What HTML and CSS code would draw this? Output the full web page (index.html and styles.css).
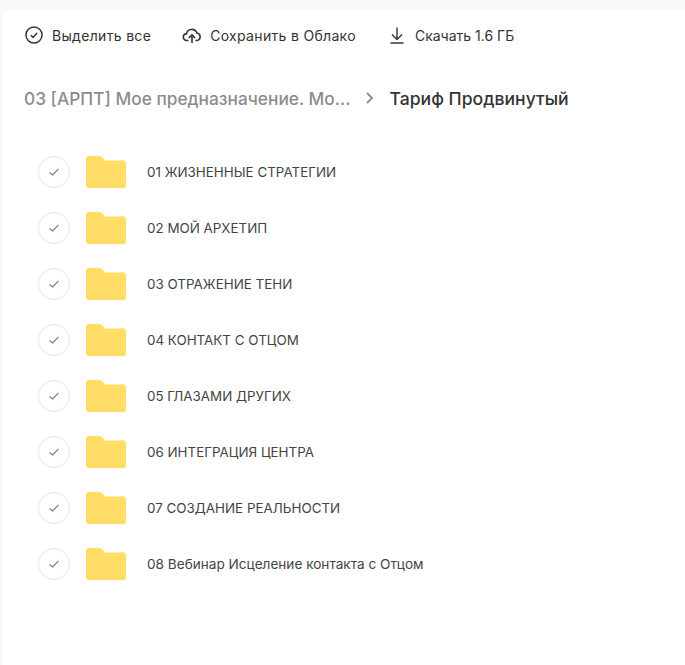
FILE: index.html
```html
<!DOCTYPE html>
<html lang="ru">
<head>
<meta charset="utf-8">
<title>Тариф Продвинутый</title>
<link rel="stylesheet" href="styles.css">
</head>
<body>
<main class="panel">
  <div class="toolbar">
    <span class="action a1">
      <svg class="ico" width="20" height="20" viewBox="0 0 20 20" fill="none" stroke="#333" stroke-width="1.5"><circle cx="10" cy="10" r="8"/><path d="M6.800 10.200l2.300 2.200 4-4.300"/></svg>
      <span class="wide">Выделить все</span>
    </span>
    <span class="action a2">
      <svg class="ico" width="20" height="20" viewBox="0 0 20 20" fill="none" stroke="#333" stroke-width="1.6"><path d="M6.500 15.500H4.800a3.300 3.300 0 0 1-.4-6.600A5.400 5.400 0 0 1 14.800 8a3.800 3.800 0 0 1 .3 7.500h-1.600"/><path d="M10 18V10M6.800 13l3.200-3.200 3.200 3.200"/></svg>
      <span class="wide">Сохранить в Облако</span>
    </span>
    <span class="action">
      <svg class="ico" width="20" height="20" viewBox="0 0 20 20" fill="none" stroke="#333" stroke-width="1.4"><path d="M10 2.500v11.500M5 9.500l5 5 5-5M3.500 18h13"/></svg>
      <span>Скачать 1.6 ГБ</span>
    </span>
  </div>
  <nav class="crumbs">
    <span class="crumb-parent">03 [АРПТ] Мое предназначение. Мо...</span>
    <svg class="chev" width="10" height="14" viewBox="0 0 10 14" fill="none" stroke="#8a8a8a" stroke-width="1.8"><path d="M2 2l5 5-5 5"/></svg>
    <span class="crumb-current">Тариф Продвинутый</span>
  </nav>
  <ul class="list">
    <li class="row"><span class="check"><svg width="12" height="10" viewBox="0 0 12 10" fill="none" stroke="#8f8f8f" stroke-width="1.4"><path d="M1.500 5.500l3 2.500 6-6"/></svg></span><svg class="folder" width="40" height="32" viewBox="0 0 40 32"><path fill="#ffdd66" d="M3 0h10c2 0 3 .8 4.200 2.200L19 4.400h18a3 3 0 0 1 3 3V29a3 3 0 0 1-3 3H3a3 3 0 0 1-3-3V3a3 3 0 0 1 3-3z"/></svg><span class="name">01 ЖИЗНЕННЫЕ СТРАТЕГИИ</span></li>
    <li class="row"><span class="check"><svg width="12" height="10" viewBox="0 0 12 10" fill="none" stroke="#8f8f8f" stroke-width="1.4"><path d="M1.500 5.500l3 2.500 6-6"/></svg></span><svg class="folder" width="40" height="32" viewBox="0 0 40 32"><path fill="#ffdd66" d="M3 0h10c2 0 3 .8 4.200 2.200L19 4.400h18a3 3 0 0 1 3 3V29a3 3 0 0 1-3 3H3a3 3 0 0 1-3-3V3a3 3 0 0 1 3-3z"/></svg><span class="name">02 МОЙ АРХЕТИП</span></li>
    <li class="row"><span class="check"><svg width="12" height="10" viewBox="0 0 12 10" fill="none" stroke="#8f8f8f" stroke-width="1.4"><path d="M1.500 5.500l3 2.500 6-6"/></svg></span><svg class="folder" width="40" height="32" viewBox="0 0 40 32"><path fill="#ffdd66" d="M3 0h10c2 0 3 .8 4.200 2.200L19 4.400h18a3 3 0 0 1 3 3V29a3 3 0 0 1-3 3H3a3 3 0 0 1-3-3V3a3 3 0 0 1 3-3z"/></svg><span class="name">03 ОТРАЖЕНИЕ ТЕНИ</span></li>
    <li class="row"><span class="check"><svg width="12" height="10" viewBox="0 0 12 10" fill="none" stroke="#8f8f8f" stroke-width="1.4"><path d="M1.500 5.500l3 2.500 6-6"/></svg></span><svg class="folder" width="40" height="32" viewBox="0 0 40 32"><path fill="#ffdd66" d="M3 0h10c2 0 3 .8 4.200 2.200L19 4.400h18a3 3 0 0 1 3 3V29a3 3 0 0 1-3 3H3a3 3 0 0 1-3-3V3a3 3 0 0 1 3-3z"/></svg><span class="name">04 КОНТАКТ С ОТЦОМ</span></li>
    <li class="row"><span class="check"><svg width="12" height="10" viewBox="0 0 12 10" fill="none" stroke="#8f8f8f" stroke-width="1.4"><path d="M1.500 5.500l3 2.500 6-6"/></svg></span><svg class="folder" width="40" height="32" viewBox="0 0 40 32"><path fill="#ffdd66" d="M3 0h10c2 0 3 .8 4.200 2.200L19 4.400h18a3 3 0 0 1 3 3V29a3 3 0 0 1-3 3H3a3 3 0 0 1-3-3V3a3 3 0 0 1 3-3z"/></svg><span class="name">05 ГЛАЗАМИ ДРУГИХ</span></li>
    <li class="row"><span class="check"><svg width="12" height="10" viewBox="0 0 12 10" fill="none" stroke="#8f8f8f" stroke-width="1.4"><path d="M1.500 5.500l3 2.500 6-6"/></svg></span><svg class="folder" width="40" height="32" viewBox="0 0 40 32"><path fill="#ffdd66" d="M3 0h10c2 0 3 .8 4.200 2.200L19 4.400h18a3 3 0 0 1 3 3V29a3 3 0 0 1-3 3H3a3 3 0 0 1-3-3V3a3 3 0 0 1 3-3z"/></svg><span class="name">06 ИНТЕГРАЦИЯ ЦЕНТРА</span></li>
    <li class="row"><span class="check"><svg width="12" height="10" viewBox="0 0 12 10" fill="none" stroke="#8f8f8f" stroke-width="1.4"><path d="M1.500 5.500l3 2.500 6-6"/></svg></span><svg class="folder" width="40" height="32" viewBox="0 0 40 32"><path fill="#ffdd66" d="M3 0h10c2 0 3 .8 4.200 2.200L19 4.400h18a3 3 0 0 1 3 3V29a3 3 0 0 1-3 3H3a3 3 0 0 1-3-3V3a3 3 0 0 1 3-3z"/></svg><span class="name">07 СОЗДАНИЕ РЕАЛЬНОСТИ</span></li>
    <li class="row"><span class="check"><svg width="12" height="10" viewBox="0 0 12 10" fill="none" stroke="#8f8f8f" stroke-width="1.4"><path d="M1.500 5.500l3 2.500 6-6"/></svg></span><svg class="folder" width="40" height="32" viewBox="0 0 40 32"><path fill="#ffdd66" d="M3 0h10c2 0 3 .8 4.200 2.200L19 4.400h18a3 3 0 0 1 3 3V29a3 3 0 0 1-3 3H3a3 3 0 0 1-3-3V3a3 3 0 0 1 3-3z"/></svg><span class="name name-mixed">08 Вебинар Исцеление контакта с Отцом</span></li>
  </ul>
</main>
</body>
</html>
```
FILE: styles.css
```css
html, body { margin: 0; height: 100%; }
body {
  background: #f7f8fa;
  padding-top: 10px;
  padding-left: 2px;
  box-sizing: border-box;
  overflow: hidden;
  font-family: Inter, "Noto Sans", sans-serif;
  color: #333;
}
.panel {
  background: #fff;
  border-radius: 8px 0 0 0;
  height: 100%;
  padding: 0 0 0 22px;
  box-sizing: border-box;
}
.toolbar {
  display: flex;
  align-items: center;
  height: 50px;
  font-size: 14px;
}
.action { display: inline-flex; align-items: center; gap: 8px; }
.wide { letter-spacing: .32px; }
.a1 { margin-right: 31px; }
.a2 { margin-right: 31px; }
.ico { flex: none; }
.crumbs {
  display: flex;
  align-items: center;
  height: 24px;
  margin-top: 26px;
  font-size: 17.3px;
  font-weight: 500;
}
.crumb-parent { color: #8c8c8c; }
.chev { margin: 0 15px 0 14px; }
.crumb-current { color: #333; font-size: 17.6px; }
.list { list-style: none; margin: 34px 0 0 14px; padding: 0; }
.row { display: flex; align-items: center; height: 56px; }
.check {
  width: 30px;
  height: 30px;
  border: 1px solid #e6e6e6;
  border-radius: 50%;
  display: flex;
  align-items: center;
  justify-content: center;
  margin-right: 16px;
  flex: none;
}
.folder { margin-right: 21px; flex: none; }
.name { font-size: 13.4px; color: #444; }
.name-mixed { font-size: 13.6px; }
```
